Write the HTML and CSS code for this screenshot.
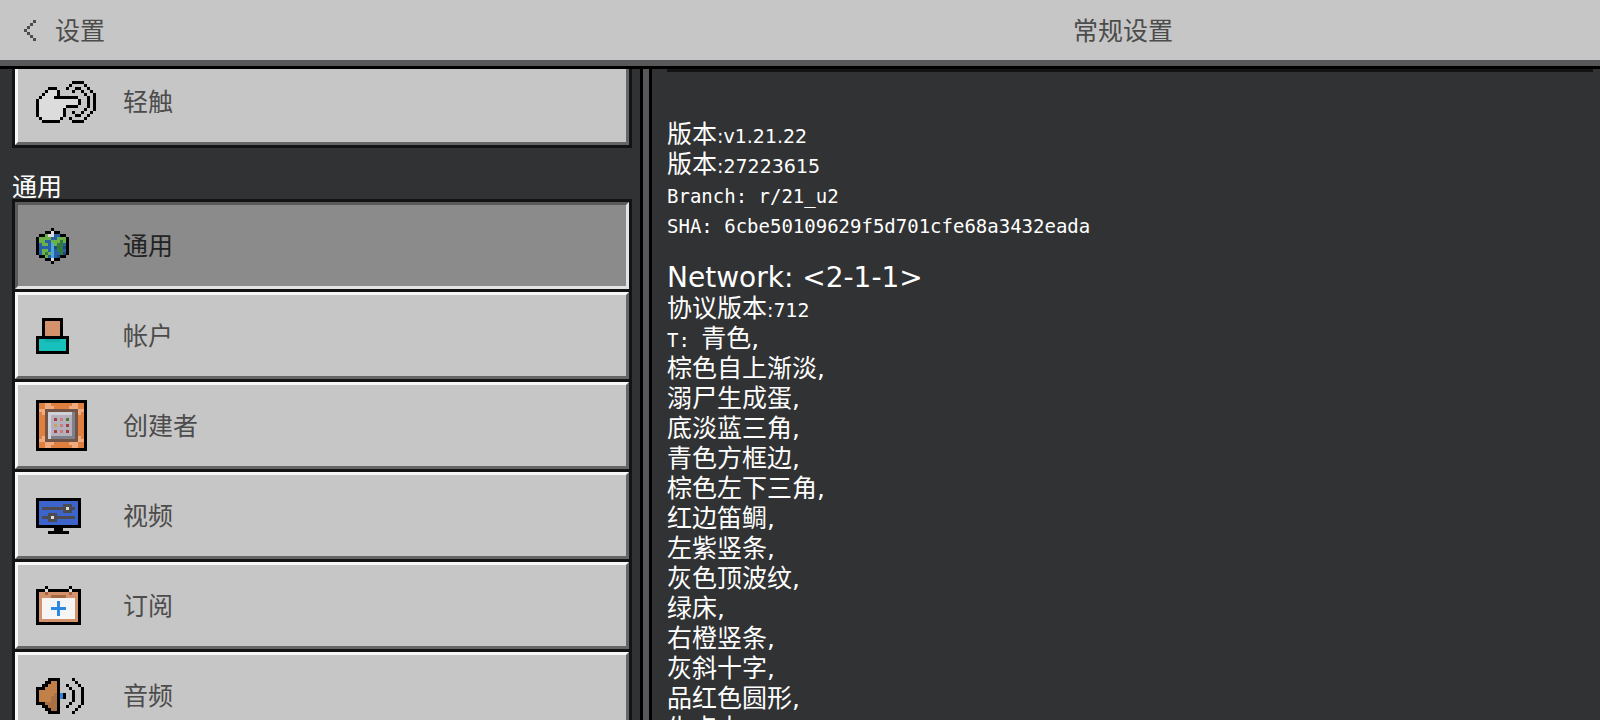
FILE: index.html
```html
<!DOCTYPE html>
<html lang="zh-CN">
<head>
  <meta charset="UTF-8">
  <meta name="viewport" content="width=device-width, initial-scale=1.0">
  <title>设置</title>
  <link rel="stylesheet" href="styles.css">
</head>
<body>
  <header>
    <button class="back-btn">
      <svg data-icon="back"></svg>
      <span>设置</span>
    </button>
    <h1>常规设置</h1>
  </header>

  <main>
    <nav class="sidebar">
      <div class="menu menu-top">
        <button class="menu-item"><span class="icon"><svg data-icon="touch"></svg></span><span class="label">轻触</span></button>
      </div>
      <h2>通用</h2>
      <div class="menu">
        <button class="menu-item active"><span class="icon"><svg data-icon="globe"></svg></span><span class="label">通用</span></button>
        <button class="menu-item"><span class="icon"><svg data-icon="account"></svg></span><span class="label">帐户</span></button>
        <button class="menu-item"><span class="icon"><svg data-icon="creator"></svg></span><span class="label">创建者</span></button>
        <button class="menu-item"><span class="icon"><svg data-icon="video"></svg></span><span class="label">视频</span></button>
        <button class="menu-item"><span class="icon"><svg data-icon="calendar"></svg></span><span class="label">订阅</span></button>
        <button class="menu-item"><span class="icon"><svg data-icon="audio"></svg></span><span class="label">音频</span></button>
      </div>
    </nav>

    <section class="content">
      <div class="divider"></div>
      <div class="info">
        <p>版本<span class="latin">:v1.21.22</span></p>
        <p>版本<span class="latin">:27223615</span></p>
        <p><span class="latin mono">Branch: r/21_u2</span></p>
        <p><span class="latin mono">SHA: 6cbe50109629f5d701cfe68a3432eada</span></p>
      </div>
      <h3>Network: &lt;2-1-1&gt;</h3>
      <div class="info">
        <p>协议版本<span class="latin">:712</span></p>
        <p><span class="latin mono">T: </span>青色,</p>
        <p>棕色自上渐淡,</p>
        <p>溺尸生成蛋,</p>
        <p>底淡蓝三角,</p>
        <p>青色方框边,</p>
        <p>棕色左下三角,</p>
        <p>红边笛鲷,</p>
        <p>左紫竖条,</p>
        <p>灰色顶波纹,</p>
        <p>绿床,</p>
        <p>右橙竖条,</p>
        <p>灰斜十字,</p>
        <p>品红色圆形,</p>
        <p>生点中,</p>
      </div>
    </section>
  </main>

  <script src="icons.js"></script>
</body>
</html>
```
FILE: styles.css
```css
* {
  margin: 0;
  padding: 0;
  box-sizing: border-box;
}

body {
  display: flex;
  flex-direction: column;
  height: 100vh;
  overflow: hidden;
  background: #313233;
  color: #ffffff;
  font-family: "DejaVu Sans", "Noto Sans CJK SC", sans-serif;
  font-size: 25px;
  line-height: 30px;
}

button {
  border: none;
  background: none;
  color: #4c4c4c;
  font: inherit;
  cursor: pointer;
}

h1,
h2,
h3 {
  font-weight: normal;
}

svg {
  display: block;
}

header {
  display: flex;
  flex: none;
  align-items: center;
  height: 69px;
  background: #c6c6c6;
  border-bottom: 3px solid #000000;
  box-shadow: inset 0 -6px #58585a;
  color: #4c4c4c;
  padding-bottom: 6px;
}

.back-btn {
  display: flex;
  align-items: center;
  gap: 19px;
  width: 646px;
  padding-left: 24px;
}

.back-btn span {
  padding-top: 4px;
}

h1 {
  flex: 1;
  padding-top: 4px;
  font-size: 25px;
  text-align: center;
}

main {
  display: flex;
  flex: 1;
  min-height: 0;
}

.sidebar {
  width: 652px;
  flex: none;
  overflow: hidden;
  padding: 0 8px 0 12px;
  border-right: 3px solid #000000;
  box-shadow: inset -6px 0 #58585a, inset -9px 0 #000000;
}

.menu {
  width: 620px;
  padding: 3px;
  background: #131313;
  display: flex;
  flex-direction: column;
  gap: 3px;
}

.menu-top {
  margin-top: -14px;
}

.sidebar h2 {
  font-size: 25px;
  line-height: 22px;
  padding-top: 29px;
}

.menu-item {
  display: flex;
  align-items: center;
  height: 87px;
  padding-left: 18px;
  background: #c6c6c6;
  border-style: solid;
  border-width: 3px;
  border-color: #f7f7f7 #656565 #656565 #f7f7f7;
  text-align: left;
}

.menu-item.active {
  background: #8b8b8b;
  border-color: #5a5a5a #e3e3e3 #e3e3e3 #5a5a5a;
  color: #232323;
}

.icon {
  width: 87px;
}

.label {
  padding-top: 2px;
}

.content {
  flex: 1;
  overflow: hidden;
  padding: 0 7px 0 15px;
}

.divider {
  height: 3px;
  margin-bottom: 48px;
  background: #131313;
}

.info p {
  height: 30px;
  white-space: pre;
}

.latin {
  font-size: 19px;
}

.mono {
  font-family: "DejaVu Sans Mono", monospace;
}

h3 {
  font-size: 28px;
  line-height: 32px;
  padding-top: 22px;
}
```
FILE: icons.js
```js
// every character is one pixel of the sprite, drawn 3px wide
const PIXEL = 3;

const colors = {
  k: "#000000",
  x: "#4c4c4c",
  w: "#dcdcdc",
  W: "#f5f5f5",
  g: "#6cb04a",
  G: "#2f7a3c",
  b: "#2860a8",
  c: "#4aa8dc",
  d: "#1e4c74",
  o: "#d4926c",
  O: "#e08040",
  l: "#f0ac80",
  n: "#745444",
  h: "#d0d0d8",
  a: "#b4b0bc",
  s: "#80808c",
  r: "#a83c40",
  e: "#507838",
  y: "#c8a060",
  p: "#c87c7c",
  t: "#18c0bc",
  T: "#14b0ac",
  B: "#3c64cc",
  m: "#4c4c50",
  u: "#2c88e0",
  f: "#a46844",
  S: "#c08048",
  D: "#a87044",
};

const icons = {
  back: [
    "...x",
    "..x.",
    ".x..",
    "x...",
    ".x..",
    "..x.",
    "...x",
  ],
  touch: [
    "............kkkk....",
    "...........k....k...",
    "....kkk...k..kk..k..",
    "...kwwwk....k..k..k.",
    "..kwwwwk........k..k",
    ".kwwwwkkkkkkkk...k.k",
    "kwwwwwwwwwwwwwk..k.k",
    "kwwwwwwwwwwwwwk..k.k",
    "kwwwwwwwwwkkkk...k.k",
    "kwwwwwwwwk......k..k",
    "kwwwwwwwwk..k..k..k.",
    "kwwwwwwwwk...kk..k..",
    ".kwwwwwwk..k....k...",
    "..kkkkkk....kkkk....",
  ],
  globe: [
    ".....k.....",
    "...kkwkk...",
    ".kkgwwbbkk.",
    "kggggbbgggk",
    "kggbbgggGgk",
    "kbggbcgGGbk",
    "kbbbbcdGGdk",
    "kbggbcbGGbk",
    "kbgGgcbbGdk",
    ".kkgbcbdkk.",
    "...kkwkk...",
    ".....k.....",
  ],
  account: [
    "..kkkkkkk..",
    "..koooook..",
    "..koooook..",
    "..koooook..",
    "..koooook..",
    "..koooook..",
    "kkkkkkkkkkk",
    "kttTTTTTttk",
    "ktttttttttk",
    "ktttttttttk",
    "ktttttttttk",
    "kkkkkkkkkkk",
  ],
  creator: [
    "kkkkkkkkkkkkkkkkk",
    "kOOllOOOOOOOllOOk",
    "kOOlllOOOOOlllOOk",
    "kllnnnnnnnnnnnllk",
    "kOlnhhhhhhhhsnlOk",
    "kOOnhaaaaaaasnOOk",
    "kOOnharapaeasnOOk",
    "kOOnhaaaaaaasnOOk",
    "kOOnhayaparasnOOk",
    "kOOnhaaaaaaasnOOk",
    "kOOnharaparasnOOk",
    "kOOnhaaaaaaasnOOk",
    "kOlnhssssssssnlOk",
    "kllnnnnnnnnnnnllk",
    "kOOlllOOOOOlllOOk",
    "kOOllOOOOOOOllOOk",
    "kkkkkkkkkkkkkkkkk",
  ],
  video: [
    "kkkkkkkkkkkkkkk",
    "kBBBBBBBBBBBBBk",
    "kBBBBBBBBmmmBBk",
    "kBmmmmmmmmwmmBk",
    "kBBBBBBBBmmmBBk",
    "kBBBmmmBBBBBBBk",
    "kBmmmwmmmmmmmBk",
    "kBBBmmmBBBBBBBk",
    "kBBBBBBBBBBBBBk",
    "kkkkkkkkkkkkkkk",
    "......kkk......",
    "....kkkkkkk....",
  ],
  calendar: [
    "...k.......k...",
    "kkkwkkkkkkkwkkk",
    "koofooooooofook",
    "koooofffffooook",
    "koWWWWWWWWWWWok",
    "koWWWWWuWWWWWok",
    "koWWWWWuWWWWWok",
    "koWWWuuuuuWWWok",
    "koWWWWWuWWWWWok",
    "koWWWWWuWWWWWok",
    "koWWWWWWWWWWWok",
    "koooooooooooook",
    "kkkkkkkkkkkkkkk",
  ],
  audio: [
    "....kkkk....k...",
    "...kkSSk.....k..",
    "..kkSSSk..k...k.",
    "kkkSSSSk...k...k",
    "kSSSSSSk....k..k",
    "kSSSSSDkuk..k..k",
    "kSSSSDDkuk..k..k",
    "kSSSSDDk....k..k",
    "kkkDDDDk...k...k",
    "..kkDDDk..k...k.",
    "...kkDDk.....k..",
    "....kkkk....k...",
  ],
};

document.querySelectorAll("svg[data-icon]").forEach((svg) => {
  const rows = icons[svg.dataset.icon];
  const width = rows[0].length;
  let rects = "";
  rows.forEach((row, y) => {
    [...row].forEach((ch, x) => {
      if (colors[ch]) {
        rects += `<rect x="${x}" y="${y}" width="1" height="1" fill="${colors[ch]}"/>`;
      }
    });
  });
  svg.setAttribute("viewBox", `0 0 ${width} ${rows.length}`);
  svg.setAttribute("width", width * PIXEL);
  svg.setAttribute("height", rows.length * PIXEL);
  svg.setAttribute("shape-rendering", "crispEdges");
  svg.innerHTML = rects;
});
```
